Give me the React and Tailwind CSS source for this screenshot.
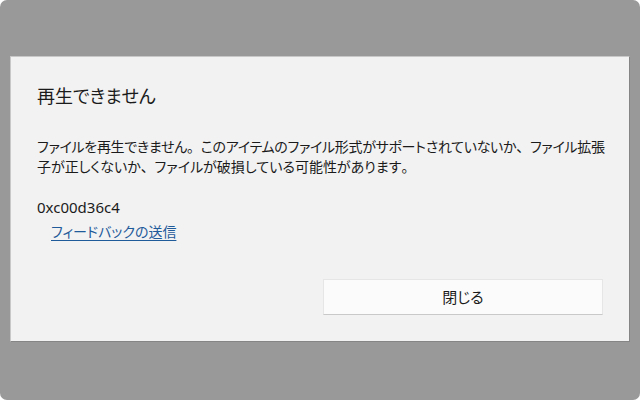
import React from "react";

const Punct = ({ children }) => (
  <span className="[font-feature-settings:normal]">{children}</span>
);

export default function App() {
  return (
    <div className="w-[640px] h-[400px] bg-white">
      <div className="w-full h-full rounded-[7px] bg-[#999999] pt-[56px] px-[10px] font-['Noto_Sans','Noto_Sans_CJK_JP',sans-serif] [font-feature-settings:'palt'] text-[#1b1b1b]">
        <div className="h-[286px] bg-[#f2f2f2] border border-[#c8c8c8] border-r-[#858585] border-b-[#858585] flex flex-col pt-[25px] px-[26px] pb-[26px]">
          <h1 className="text-[18px] leading-[28px]">再生できません</h1>
          <p className="mt-[27px] text-[14px] leading-[20px] whitespace-nowrap">
            <span className="tracking-[-0.3px]">
              ファイルを再生できません<Punct>。</Punct>このアイテムのファイル形式がサポートされていないか<Punct>、</Punct>ファイル拡張
            </span>
            <br />
            子が正しくないか<Punct>、</Punct>ファイルが破損している可能性があります<Punct>。</Punct>
          </p>
          <p className="mt-[20px] text-[15px] leading-[20px]">0xc00d36c4</p>
          <a href="#" className="mt-[5px] ml-[14px] self-start text-[14px] leading-[20px] text-[#1f5a9a] underline underline-offset-[3px]">
            フィードバックの送信
          </a>
          <div className="mt-auto flex justify-end">
            <button
              type="button"
              className="w-[280px] h-[36px] bg-[#fbfbfb] border border-[#e6e6e6] border-b-[#c9c9c9] text-[15px] text-[#1b1b1b]"
            >
              閉じる
            </button>
          </div>
        </div>
      </div>
    </div>
  );
}
